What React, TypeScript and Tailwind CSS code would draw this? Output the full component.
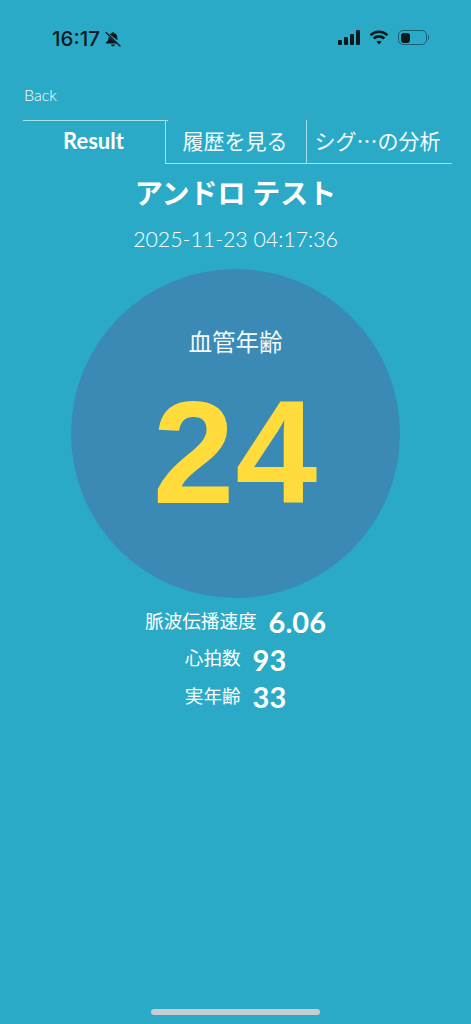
const sans = "font-['Lato','Noto_Sans_CJK_JP',sans-serif]";

function StatRow({ label, value }: { label: string; value: string }) {
  return (
    <div className="flex h-[37.5px] items-center justify-center gap-3">
      <span className="text-[18.6px] text-white">{label}</span>
      <span className="text-[29px] font-bold text-white">{value}</span>
    </div>
  );
}

function StatusBar() {
  return (
    <div className="flex h-[76px] items-start justify-between pl-[52px] pr-[42px] pt-[26px]">
      <div className="flex items-center gap-[5px] text-[#0c1a20]">
        <span className="font-['Inter',sans-serif] text-[20.5px] leading-[26px] font-medium">16:17</span>
        <svg width="16" height="17" viewBox="0 0 16 17" fill="currentColor">
          <path d="M8 1.2c.7 0 1.1.5 1.2 1.1 2.1.5 3.2 2.3 3.2 4.5v2.4l-7.9-6c.8-.6 1.6-.8 2.3-.9.1-.6.5-1.1 1.2-1.1z" />
          <path d="M3.6 5.8l8.6 6.7H1.4c-.6 0-.9-.7-.4-1.2.9-.9 2.4-1.6 2.4-3.8 0-.6.1-1.2.2-1.7z" />
          <path d="M6 13.4h4c-.2 1-1 1.8-2 1.8s-1.800-.8-2-1.800z" />
          <path d="M1 1.500l14 13.500" stroke="currentColor" strokeWidth="1.300" strokeLinecap="round" />
        </svg>
      </div>
      <div className="flex items-center gap-[8px] pt-[4px]">
        <svg width="23" height="15" viewBox="0 0 23 15" fill="#0c1a20">
          <rect x="0" y="10" width="4" height="5" rx="1" />
          <rect x="6" y="7" width="4" height="8" rx="1" />
          <rect x="12" y="4" width="4" height="11" rx="1" />
          <rect x="18" y="0" width="4" height="15" rx="1" />
        </svg>
        <svg className="mr-[1px]" width="20" height="15" viewBox="0 0 20 15" fill="none" stroke="#0c1a20" strokeWidth="2.600">
          <path d="M1.500 5.200C6.300 .6 13.700 .6 18.500 5.200" />
          <path d="M4.700 8.500c3-2.800 7.600-2.800 10.600 0" />
          <path d="M10 14.600l-2.700-3c1.600-1.300 3.800-1.300 5.400 0z" fill="#0c1a20" stroke="none" />
        </svg>
        <div className="flex items-center">
          <div className="flex h-[15px] w-[29px] items-center rounded-[5px] border border-[#1c5f74] pl-[2px]">
            <div className="h-[10px] w-[9px] rounded-[3px] bg-[#0c1a20]" />
          </div>
          <div className="ml-[1px] h-[5px] w-[1px] rounded-r bg-[#1c5f74]" />
        </div>
      </div>
    </div>
  );
}

export default function App() {
  return (
    <div className={`flex h-[1024px] w-[471px] flex-col overflow-hidden bg-[#2aaac6] ${sans}`}>
      <StatusBar />

      <div className="h-[44px] pl-[24px] pt-[9px] text-[16px] leading-[20px] font-light text-white">Back</div>

      <div className="ml-[23px] flex h-[44px] w-[429px] text-[#f2fbfd]">
        <div className="relative flex w-[143px] items-center justify-center border-r-[1.5px] border-t-[1.5px] border-[#a5e0ec] pb-[4px] pr-[1px] text-[22px] font-bold text-white">
          Result
          <div className="absolute -right-[3px] -top-[1.5px] h-[1.5px] w-[3px] bg-[#a5e0ec]" />
        </div>
        <div className="flex w-[141px] items-center justify-center border-b-[1.5px] border-r-[1.5px] border-[#a5e0ec] pb-[2px] pr-[2px] text-[21px]">
          履歴を見る
        </div>
        <div className="flex flex-1 items-center justify-center border-b-[1.5px] border-[#a5e0ec] pb-[2px] pr-[4px] text-[21px]">
          シグ⋯の分析
        </div>
      </div>

      <h1 className="mt-[9px] text-center text-[28px] leading-[40px] font-bold text-white">アンドロ テスト</h1>
      <p className="mt-[10px] text-center text-[21.3px] leading-[32px] font-light text-white">2025-11-23 04:17:36</p>

      <div className="mx-auto mt-[14px] flex h-[329px] w-[329px] flex-col items-center rounded-full bg-[#3a8ab5]">
        <span className="mt-[57px] text-[23.5px] leading-[32px] text-[#f2fbfd]">血管年齢</span>
        <span className="mt-[8px] font-['Liberation_Sans',sans-serif] text-[147px] tracking-[1px] leading-[172px] font-bold text-[#ffdb3b]">24</span>
      </div>

      <div className="mt-[5px]">
        <StatRow label="脈波伝播速度" value="6.06" />
        <StatRow label="心拍数" value="93" />
        <StatRow label="実年齢" value="33" />
      </div>

      <div className="mt-auto mb-[9px] flex justify-center">
        <div className="h-[6px] w-[169px] rounded-full bg-[#c9cdd0]" />
      </div>
    </div>
  );
}
